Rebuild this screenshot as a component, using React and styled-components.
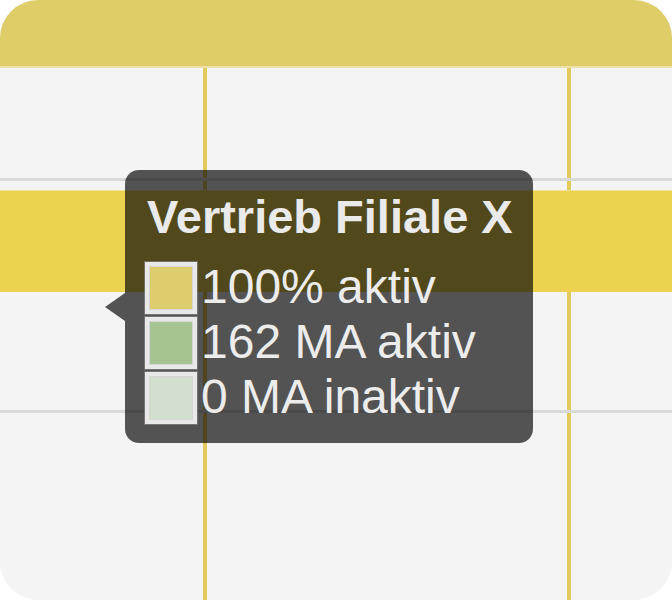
import React from 'react';
import styled, { createGlobalStyle } from 'styled-components';

const GlobalStyle = createGlobalStyle`
  html, body {
    margin: 0;
    padding: 0;
    background: #ffffff;
  }
  body {
    font-family: "Liberation Sans", Arial, sans-serif;
  }
`;

const Card = styled.div`
  position: relative;
  width: 672px;
  height: 600px;
  border-radius: 38px;
  overflow: hidden;
  display: flex;
  flex-direction: column;
  background: #f4f4f4;
`;

const Header = styled.div`
  height: 66px;
  flex-shrink: 0;
  background: #dfcd6a;
  border-bottom: 2px solid #ece2a9;
`;

const ChartBody = styled.div`
  flex: 1;
  background-color: #f4f4f4;
  background-image:
    linear-gradient(to right, transparent 203px, #e3cb5b 203px, #e3cb5b 207px, transparent 207px),
    linear-gradient(to right, transparent 567px, #e3cb5b 567px, #e3cb5b 571px, transparent 571px);
`;

const TimeRow = styled.div`
  height: ${(p) => p.$height}px;
  border-bottom: 3px solid #d9d9d9;
`;

const Bar = styled.div`
  margin-top: 9px;
  height: 101px;
  background: #ecd24f;
  border-top: 1px solid #f1e39c;
`;

const Tooltip = styled.div`
  position: absolute;
  left: 125px;
  top: 170px;
  width: 408px;
  box-sizing: border-box;
  padding: 24px 20px 19px;
  border-radius: 14px;
  background: rgba(0, 0, 0, 0.66);
  color: #ececec;

  &::before {
    content: '';
    position: absolute;
    left: -20px;
    top: 123px;
    border-right: 20px solid rgba(0, 0, 0, 0.66);
    border-top: 14px solid transparent;
    border-bottom: 14px solid transparent;
  }
`;

const Title = styled.div`
  font-size: 47px;
  line-height: 45px;
  font-weight: 700;
  padding-left: 2px;
  margin-bottom: 20px;
  color: #eaeaea;
  white-space: nowrap;
`;

const LegendRow = styled.div`
  display: flex;
  align-items: flex-end;
  height: 55px;
  font-size: 48px;
  line-height: 55px;
  white-space: nowrap;
`;

const Swatch = styled.span`
  width: 52px;
  height: 52px;
  flex-shrink: 0;
  box-sizing: border-box;
  border: 4px solid #e8e8e8;
  box-shadow: inset 0 0 0 1px #d6d6d6, 0 0 0 1px rgba(140, 140, 140, 0.6);
  background: ${(p) => p.$color};
`;

const Label = styled.span`
  margin-left: 4px;
`;

const legend = [
  { color: '#dfcd6d', label: '100% aktiv' },
  { color: '#a6c392', label: '162 MA aktiv' },
  { color: '#d2dfcf', label: '0 MA inaktiv' },
];

export default function App() {
  return (
    <>
      <GlobalStyle />
      <Card>
        <Header />
        <ChartBody>
          <TimeRow $height={110} />
          <TimeRow $height={220}>
            <Bar />
          </TimeRow>
        </ChartBody>
        <Tooltip>
          <Title>Vertrieb Filiale X</Title>
          {legend.map((item) => (
            <LegendRow key={item.label}>
              <Swatch $color={item.color} />
              <Label>{item.label}</Label>
            </LegendRow>
          ))}
        </Tooltip>
      </Card>
    </>
  );
}
